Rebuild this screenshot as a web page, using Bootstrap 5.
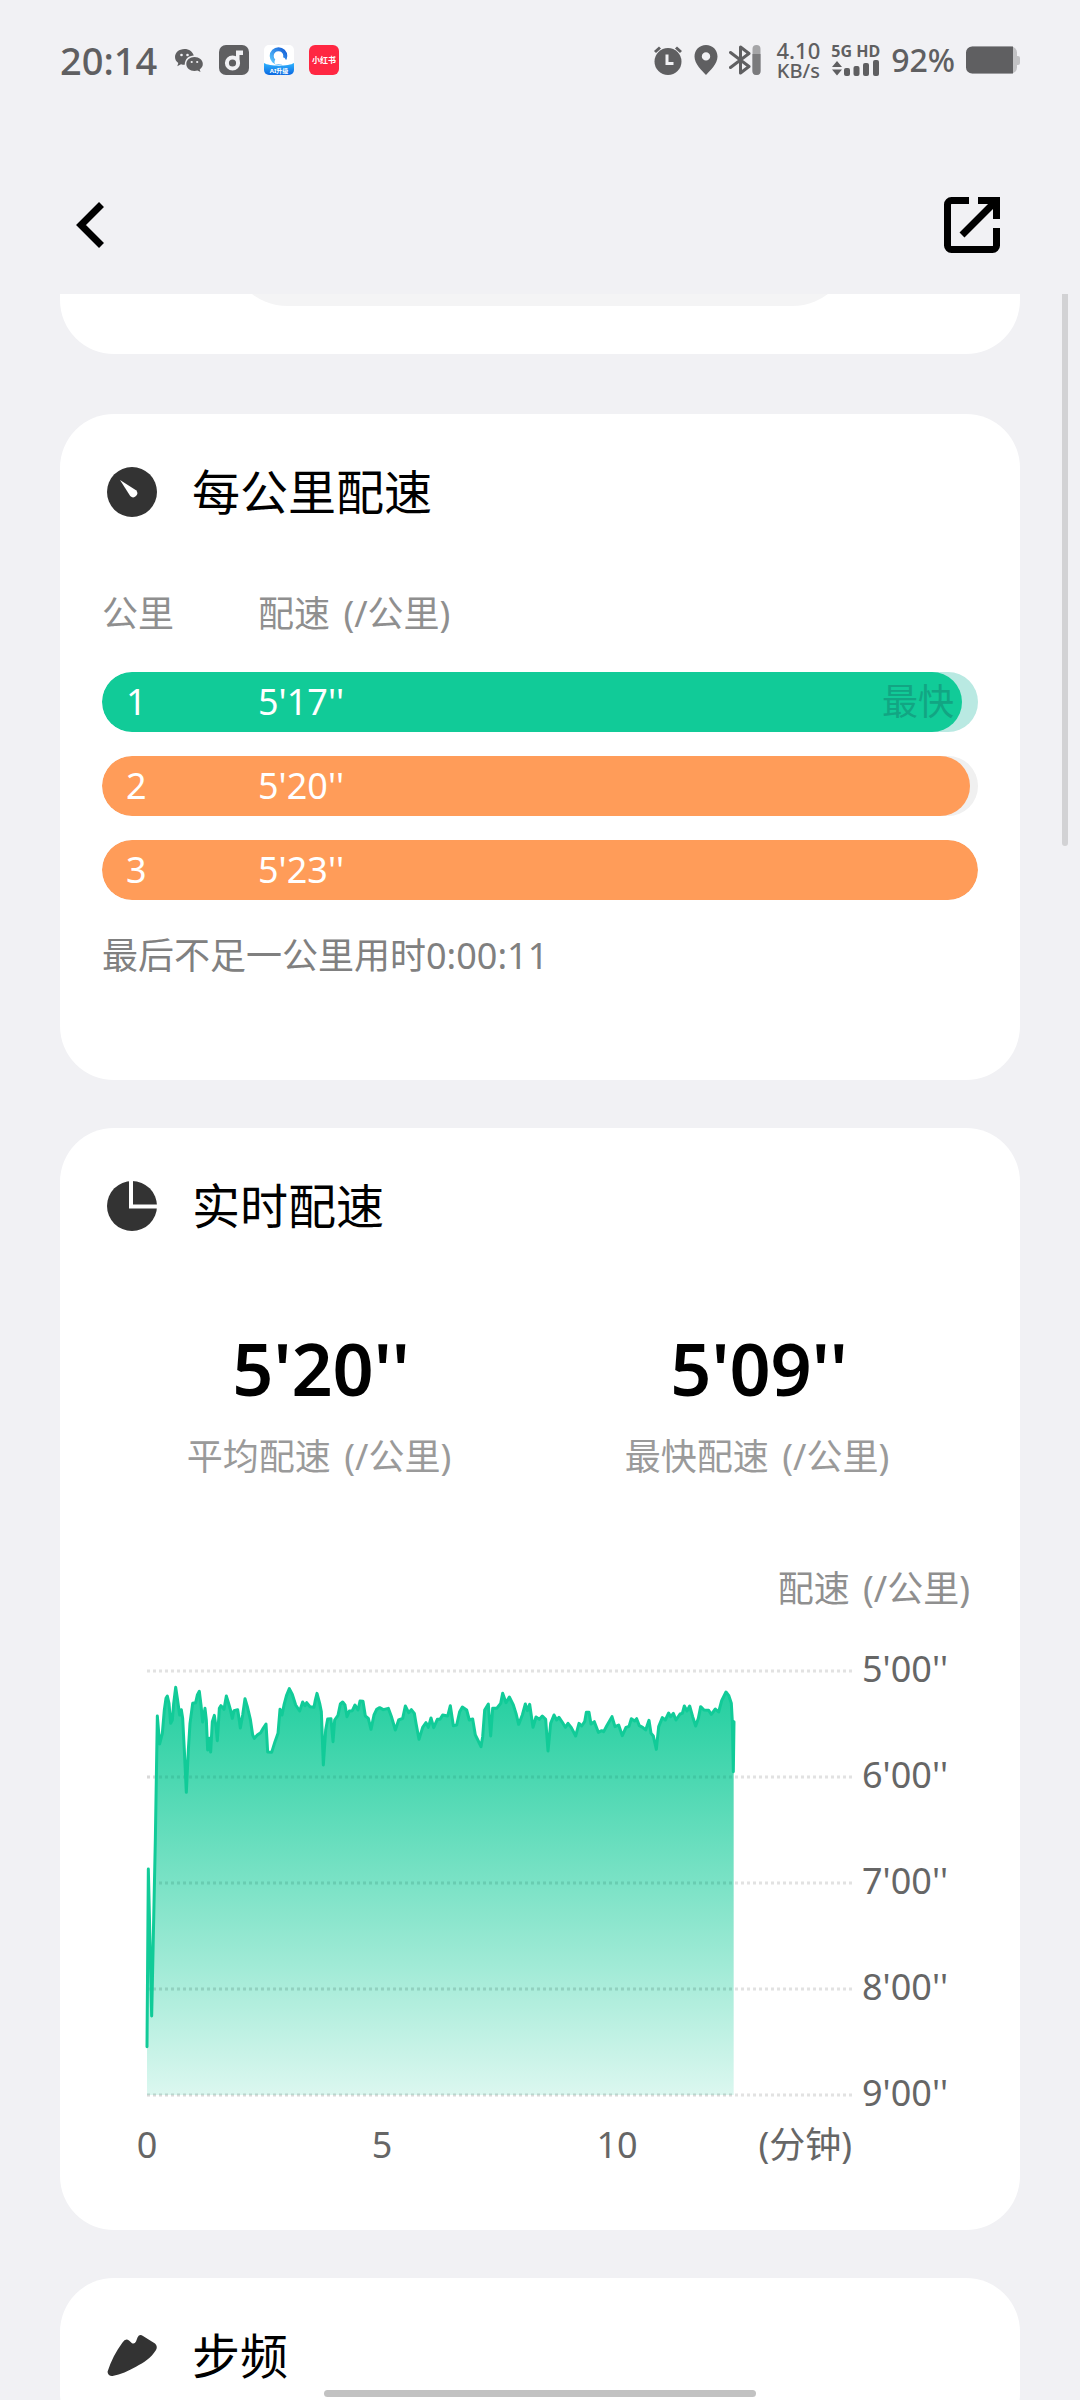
<!DOCTYPE html>
<html lang="zh-CN">
<head>
<meta charset="utf-8">
<meta name="viewport" content="width=device-width, initial-scale=1">
<title>每公里配速</title>
<link href="https://cdn.jsdelivr.net/npm/bootstrap@5.3.0/dist/css/bootstrap.min.css" rel="stylesheet">
<style>
  body { font-family: "Noto Sans", "Noto Sans CJK SC", sans-serif; font-size: 36px; line-height: 48px; color: #000; background: #f1f1f4; }
  svg { display: block; flex: none; }
  .statusbar { height: 120px; padding: 0 60px; color: #5f5f61; }
  .status-left { gap: 15px; }
  .status-right { gap: 11px; }
  .clock { font-size: 38px; font-weight: 500; margin-right: 2px; }
  .net-speed { font-size: 22px; line-height: 22px; font-weight: 500; margin-left: 5px; }
  .net-unit { font-size: 20px; line-height: 20px; }
  .net-type { font-size: 16px; line-height: 16px; font-weight: 700; }
  .percent { font-size: 32px; font-weight: 500; }
  .topbar { height: 174px; padding: 36px 76px 0 72px; }
  .tool { border: 0; background: none; padding: 4px; color: #000; line-height: 0; }
  .panel { background: #fff; border-radius: 54px; margin: 0 60px 48px; padding: 48px 42px 61px; }
  .panel-prev { height: 60px; border-radius: 0 0 54px 54px; margin-bottom: 60px; padding: 0 0 48px; }
  .pill { flex: none; width: 65%; height: 120px; border: 0; border-radius: 60px; background: #f4f4f5; }
  .panel-splits { padding-bottom: 100px; }
  .panel-head { gap: 30px; }
  .panel-head h2 { font-size: 48px; line-height: 60px; font-weight: 400; margin: 0; }
  .soft { color: #8f8f8f; }
  .softer { color: #9a9a9a; }
  .per-km { margin: 0 4px; }
  .splits { display: block; margin-top: 68px; }
  .splits thead, .splits tbody { display: block; }
  .splits tr { display: flex; }
  .splits th, .splits td { font-weight: 400; padding: 0; }
  .splits thead th:first-child { width: 156px; }
  .splits tbody { margin-top: 34px; }
  .splits tbody tr { position: relative; height: 60px; padding: 0 24px; align-items: center; border-radius: 30px; background: #f0f0f0; color: #fff; margin-bottom: 24px; overflow: hidden; }
  .splits tbody tr:last-child { margin-bottom: 0; }
  .splits tbody tr.fastest { background: #b9e9e2; }
  .splits tbody th { width: 132px; }
  .splits tbody .txt { position: relative; }
  .fill { position: absolute; left: 0; top: 0; bottom: 0; border-radius: 30px; background: #ff9c59; }
  .fastest .fill { background: #11cb98; }
  .tag-fast { color: #12a583; }
  .note { margin: 32px 0 0; color: #808080; }
  .stats { margin-top: 90px; }
  .stat-num { font-size: 72px; line-height: 84px; font-weight: 600; }
  .stat-cap { margin-top: 23px; }
  .axis-name { margin-top: 84px; padding-right: 4px; }
  .chart { margin-top: 32px; padding-left: 45px; gap: 10px; color: #666; }
  .plot { padding-top: 26px; }
  .plot svg { width: 100%; height: 424px; overflow: visible; }
  .ticks-y { width: 116px; height: 472px; }
  .ticks-x { margin-top: 26px; }
  .tick { width: 0; display: flex; justify-content: center; white-space: nowrap; }
  .tick-unit { justify-content: flex-end; }
  .thumb { position: absolute; right: 12px; top: 0; width: 6px; height: 552px; border-radius: 0 0 3px 3px; background: #d2d2d4; }
  .home-bar { position: absolute; left: 30%; right: 30%; bottom: 3px; height: 7px; border-radius: 4px; background: #c2c2c2; }
</style>
</head>
<body>
<div class="vh-100 d-flex flex-column overflow-hidden position-relative">

  <div class="statusbar d-flex align-items-center justify-content-between flex-shrink-0">
    <div class="status-left d-flex align-items-center">
      <span class="clock">20:14</span>
      <!-- chat bubbles -->
      <svg width="30" height="30" viewBox="0 0 30 30" fill="#5f5f61">
        <path d="M10.500 4C5 4 1 7.600 1 12c0 2.500 1.300 4.600 3.300 6l-1 3.200 3.700-1.900c1.200.4 2.400.5 3.700.5C11 13.500 15 10.800 19.800 10.600 18.700 6.700 15 4 10.500 4z"/>
        <path d="M20.500 12c-4.700 0-8.200 3-8.200 7s3.500 7 8.200 7c1 0 2-.2 3-.5l3 1.600-.8-2.700c1.900-1.200 3.100-3.100 3.100-5.400 0-4-3.600-7-8.300-7z"/>
        <g fill="#f1f1f4"><circle cx="7.500" cy="10" r="1.300"/><circle cx="13.500" cy="10" r="1.300"/><circle cx="17.700" cy="17" r="1.100"/><circle cx="23.200" cy="17" r="1.100"/></g>
      </svg>
      <!-- music note -->
      <svg width="30" height="30" viewBox="0 0 30 30">
        <rect width="30" height="30" rx="7" fill="#5f5f61"/>
        <circle cx="13.500" cy="18" r="5.600" fill="none" stroke="#f1f1f4" stroke-width="4"/>
        <path d="M17 18V5.500h7v4.500h-3.500v8z" fill="#f1f1f4"/>
      </svg>
      <!-- browser -->
      <svg width="30" height="30" viewBox="0 0 30 30">
        <defs>
          <linearGradient id="ring" x1="0" x2="1" y1="1" y2="0"><stop stop-color="#5cc8ff"/><stop offset="1" stop-color="#1560d8"/></linearGradient>
          <linearGradient id="sea" x1="0" x2="0" y1="0" y2="1"><stop stop-color="#2fb4ff"/><stop offset="1" stop-color="#0a66e0"/></linearGradient>
          <clipPath id="tile"><rect width="30" height="30" rx="5"/></clipPath>
        </defs>
        <g clip-path="url(#tile)">
          <rect width="30" height="30" fill="#fff"/>
          <path d="M0 18c5 3.500 25 3.500 30 0v12H0z" fill="url(#sea)"/>
          <circle cx="14.500" cy="11" r="6.800" fill="#fff" stroke="url(#ring)" stroke-width="4"/>
          <path d="M11 19a4 4 0 0 1 3-6 5 5 0 0 1 8 2 2.500 2.500 0 0 1 0 4z" fill="#fff"/>
          <text x="15" y="28" font-size="6" font-weight="700" fill="#fff" text-anchor="middle">AI升级</text>
        </g>
      </svg>
      <svg width="30" height="30" viewBox="0 0 30 30">
        <rect width="30" height="30" rx="6" fill="#ff2742"/>
        <text x="15" y="18" font-size="8" font-weight="700" fill="#fff" text-anchor="middle">小红书</text>
      </svg>
    </div>
    <div class="status-right d-flex align-items-center">
      <!-- alarm -->
      <svg width="30" height="30" viewBox="0 0 30 30">
        <circle cx="15" cy="16.500" r="13.500" fill="#5f5f61"/>
        <path d="M2 7l5-4.500M28 7l-5-4.500" stroke="#5f5f61" stroke-width="3"/>
        <path d="M14 9.500V18.500H20.500" fill="none" stroke="#f1f1f4" stroke-width="3"/>
      </svg>
      <svg width="24" height="30" viewBox="0 0 24 30">
        <path fill="#5f5f61" fill-rule="evenodd" d="M12 0C5.400 0 .5 5 .5 11.500.5 19 8 25.500 12 30c4-4.500 11.500-11 11.500-18.500C23.500 5 18.600 0 12 0zm0 7.200a4.200 4.200 0 1 1 0 8.400 4.200 4.200 0 0 1 0-8.400z"/>
      </svg>
      <svg width="32" height="30" viewBox="0 0 32 30">
        <path d="M1.500 7.500L20 21.500 11.500 28V2L20 8.500 1.500 22.500" fill="none" stroke="#5f5f61" stroke-width="3" stroke-linejoin="round" stroke-linecap="round"/>
        <rect x="23.500" width="8" height="30" rx="4" fill="#a5a5a7"/>
        <path d="M23.500 9h8v17a4 4 0 0 1-8 0z" fill="#7b7b7d"/>
      </svg>
      <div class="net-speed text-center"><div>4.10</div><div class="net-unit">KB/s</div></div>
      <div class="d-flex flex-column">
        <span class="net-type">5G HD</span>
        <svg width="48" height="18" viewBox="0 0 48 18" fill="#5f5f61">
          <path d="M1 8l5-6 5 6zM1 10.500h10l-5 6z"/>
          <rect x="13" y="9" width="6" height="8" rx="2"/><rect x="22.500" y="7" width="6" height="10" rx="2"/><rect x="32" y="4" width="6" height="13" rx="2"/><rect x="42" y="1" width="6" height="16" rx="2"/>
        </svg>
      </div>
      <span class="percent">92%</span>
      <svg width="54" height="28" viewBox="0 0 54 28">
        <path d="M6 0.500h39a6 6 0 0 1 6 6v3.500h1a2 2 0 0 1 2 2v5a2 2 0 0 1-2 2h-1v2.500a6 6 0 0 1-6 6H6z" fill="#c2c2c4"/>
        <path d="M6 .5h41v27H6a6 6 0 0 1-6-6V6.500a6 6 0 0 1 6-6z" fill="#5f5f61"/>
      </svg>
    </div>
  </div>

  <header class="topbar d-flex align-items-center justify-content-between flex-shrink-0">
    <button class="tool" type="button" aria-label="返回">
      <svg width="28" height="46" viewBox="0 0 28 46"><path d="M25.500 2.500L5 23l20.500 20.500" fill="none" stroke="#000" stroke-width="7"/></svg>
    </button>
    <button class="tool" type="button" aria-label="分享">
      <svg width="56" height="56" viewBox="0 0 56 56" fill="none" stroke="#000" stroke-width="7">
        <path d="M25 3.500H7.500a4 4 0 0 0-4 4V48.500a4 4 0 0 0 4 4H48.500a4 4 0 0 0 4-4V31"/>
        <path d="M34 3.500H52.500V22M52 4L18 38"/>
      </svg>
    </button>
  </header>

  <main class="flex-grow-1 overflow-hidden position-relative">
    <section class="panel panel-prev d-flex justify-content-center align-items-end overflow-hidden">
      <button class="pill" type="button" aria-label="更多"></button>
    </section>

    <section class="panel panel-splits">
      <div class="panel-head d-flex align-items-center">
        <svg width="60" height="60" viewBox="0 0 60 60">
          <circle cx="30" cy="30" r="25" fill="#333"/>
          <path d="M18 18L34 28.200A4 4 0 1 1 28.200 34z" fill="#fff"/>
        </svg>
        <h2>每公里配速</h2>
      </div>
      <table class="splits">
        <thead class="soft"><tr><th scope="col">公里</th><th scope="col">配速 <span class="per-km">(/公里)</span></th></tr></thead>
        <tbody>
          <tr class="fastest"><th scope="row"><span class="fill" style="width:98.2%"></span><span class="txt">1</span></th><td><span class="txt">5'17''</span></td><td class="ms-auto"><span class="txt tag-fast">最快</span></td></tr>
          <tr><th scope="row"><span class="fill" style="width:99.1%"></span><span class="txt">2</span></th><td><span class="txt">5'20''</span></td></tr>
          <tr><th scope="row"><span class="fill" style="width:100%"></span><span class="txt">3</span></th><td><span class="txt">5'23''</span></td></tr>
        </tbody>
      </table>
      <p class="note">最后不足一公里用时0:00:11</p>
    </section>

    <section class="panel">
      <div class="panel-head d-flex align-items-center">
        <svg width="60" height="60" viewBox="0 0 60 60">
          <circle cx="30" cy="30" r="25" fill="#333"/>
          <path d="M29 4V30.500H56" fill="none" stroke="#fff" stroke-width="4"/>
        </svg>
        <h2>实时配速</h2>
      </div>
      <div class="stats row g-0 text-center">
        <div class="col-6"><div class="stat-num">5'20''</div><div class="stat-cap softer">平均配速 <span class="per-km">(/公里)</span></div></div>
        <div class="col-6"><div class="stat-num">5'09''</div><div class="stat-cap softer">最快配速 <span class="per-km">(/公里)</span></div></div>
      </div>
      <div class="axis-name text-end soft">配速 <span class="per-km">(/公里)</span></div>
      <div class="chart d-flex align-items-start">
        <div class="plot flex-grow-1">
          <svg viewBox="0 0 2115 1272" preserveAspectRatio="none" role="img" aria-label="实时配速">
            <defs>
              <linearGradient id="area" gradientUnits="userSpaceOnUse" x1="0" x2="0" y1="49" y2="1272"><stop stop-color="#11cb98" stop-opacity=".93"/><stop offset="1" stop-color="#11cb98" stop-opacity=".15"/></linearGradient>
            </defs>
            <path d="M0 0H2115M0 318H2115M0 636H2115M0 954H2115M0 1272H2115" stroke="#e2e2e2" stroke-width="3" stroke-dasharray="3 3" vector-effect="non-scaling-stroke"/>
            <path fill="url(#area)" d="M0 1272V1127L4 594 14 1035 25 507 31 135 38 219 46 187 52 117 57 82 61 75 66 97 71 157 76 147 80 97 86 49 91 82 98 132 103 116 107 142 112 237 118 364 124 237 129 157 137 97 146 95 151 72 157 61 162 102 167 153 174 112 178 147 182 237 187 202 191 243 196 152 202 133 207 167 211 209 217 112 222 104 231 115 238 75 244 94 250 115 256 142 261 119 272 116 276 142 280 171 287 132 294 83 301 107 310 145 317 192 322 202 331 192 341 185 349 171 357 159 360 207 362 243 374 244 384 212 393 187 399 115 405 132 411 102 419 72 427 53 436 70 446 102 458 120 467 93 474 104 479 95 489 107 501 109 505 87 510 67 518 97 523 122 529 282 536 177 542 144 552 143 558 212 563 147 573 133 580 99 587 93 594 102 600 137 607 120 616 119 624 102 633 117 639 90 648 91 655 135 664 142 672 175 681 132 689 115 698 110 709 116 724 112 734 139 745 177 755 147 767 142 775 105 785 125 793 116 802 127 807 157 816 205 827 169 837 155 844 169 852 141 860 170 871 145 879 145 887 132 902 135 910 104 919 164 929 162 938 122 946 108 959 117 967 147 977 144 985 192 994 210 1002 227 1007 197 1013 117 1024 99 1031 195 1037 112 1049 112 1061 97 1067 67 1077 95 1087 78 1099 102 1107 127 1115 160 1126 132 1135 99 1141 119 1148 100 1158 169 1167 138 1177 145 1186 135 1196 145 1203 240 1211 157 1221 132 1229 147 1236 139 1246 154 1255 169 1263 157 1273 170 1286 195 1296 157 1304 165 1313 152 1318 124 1326 124 1332 159 1342 152 1354 184 1364 179 1370 182 1379 165 1395 137 1404 167 1415 162 1426 194 1437 169 1446 166 1453 143 1463 150 1469 143 1477 164 1487 169 1496 177 1506 148 1512 187 1519 195 1528 235 1535 167 1546 140 1555 147 1565 126 1571 137 1579 127 1587 147 1599 129 1606 127 1612 105 1620 120 1628 105 1637 137 1646 165 1654 142 1661 107 1671 117 1685 118 1693 130 1705 114 1715 123 1724 89 1737 63 1745 73 1753 97 1756 152 1760 302V1272z"/>
            <path d="M0 318H1760M0 636H1760M0 954H1760M0 1272H1760" stroke="#000" stroke-opacity=".04" stroke-width="3" stroke-dasharray="3 3" vector-effect="non-scaling-stroke"/>
            <path fill="none" stroke="#11cb98" stroke-width="9" stroke-linejoin="round" stroke-linecap="round" d="M0 1127L4 594 14 1035 25 507 31 135 38 219 46 187 52 117 57 82 61 75 66 97 71 157 76 147 80 97 86 49 91 82 98 132 103 116 107 142 112 237 118 364 124 237 129 157 137 97 146 95 151 72 157 61 162 102 167 153 174 112 178 147 182 237 187 202 191 243 196 152 202 133 207 167 211 209 217 112 222 104 231 115 238 75 244 94 250 115 256 142 261 119 272 116 276 142 280 171 287 132 294 83 301 107 310 145 317 192 322 202 331 192 341 185 349 171 357 159 360 207 362 243 374 244 384 212 393 187 399 115 405 132 411 102 419 72 427 53 436 70 446 102 458 120 467 93 474 104 479 95 489 107 501 109 505 87 510 67 518 97 523 122 529 282 536 177 542 144 552 143 558 212 563 147 573 133 580 99 587 93 594 102 600 137 607 120 616 119 624 102 633 117 639 90 648 91 655 135 664 142 672 175 681 132 689 115 698 110 709 116 724 112 734 139 745 177 755 147 767 142 775 105 785 125 793 116 802 127 807 157 816 205 827 169 837 155 844 169 852 141 860 170 871 145 879 145 887 132 902 135 910 104 919 164 929 162 938 122 946 108 959 117 967 147 977 144 985 192 994 210 1002 227 1007 197 1013 117 1024 99 1031 195 1037 112 1049 112 1061 97 1067 67 1077 95 1087 78 1099 102 1107 127 1115 160 1126 132 1135 99 1141 119 1148 100 1158 169 1167 138 1177 145 1186 135 1196 145 1203 240 1211 157 1221 132 1229 147 1236 139 1246 154 1255 169 1263 157 1273 170 1286 195 1296 157 1304 165 1313 152 1318 124 1326 124 1332 159 1342 152 1354 184 1364 179 1370 182 1379 165 1395 137 1404 167 1415 162 1426 194 1437 169 1446 166 1453 143 1463 150 1469 143 1477 164 1487 169 1496 177 1506 148 1512 187 1519 195 1528 235 1535 167 1546 140 1555 147 1565 126 1571 137 1579 127 1587 147 1599 129 1606 127 1612 105 1620 120 1628 105 1637 137 1646 165 1654 142 1661 107 1671 117 1685 118 1693 130 1705 114 1715 123 1724 89 1737 63 1745 73 1753 97 1756 152 1759 302 1761 152"/>
          </svg>
          <div class="ticks-x d-flex justify-content-between"><span class="tick">0</span><span class="tick">5</span><span class="tick">10</span><span class="tick tick-unit">(分钟)</span></div>
        </div>
        <div class="ticks-y d-flex flex-column justify-content-between flex-shrink-0"><span>5'00''</span><span>6'00''</span><span>7'00''</span><span>8'00''</span><span>9'00''</span></div>
      </div>
    </section>

    <section class="panel">
      <div class="panel-head d-flex align-items-center">
        <svg width="60" height="60" viewBox="0 0 60 60">
          <path d="M5.600 45.500C9 35 14 25 20.500 16.500Q23.500 12 27 14.500L30 17.200Q32.500 18.500 34 15.500L35.500 11.500Q37.500 7.500 41 10L53 17.500Q56 20.500 54 24C49 32 42 36.500 34 40.700 26 45 19 48.500 10.500 50 5.500 50.500 5.600 45.500 5.600 45.500z" fill="#333"/>
        </svg>
        <h2>步频</h2>
      </div>
    </section>
    <div class="thumb"></div>
  </main>
  <div class="home-bar"></div>
</div>
<script src="https://cdn.jsdelivr.net/npm/bootstrap@5.3.0/dist/js/bootstrap.bundle.min.js"></script>
</body>
</html>
